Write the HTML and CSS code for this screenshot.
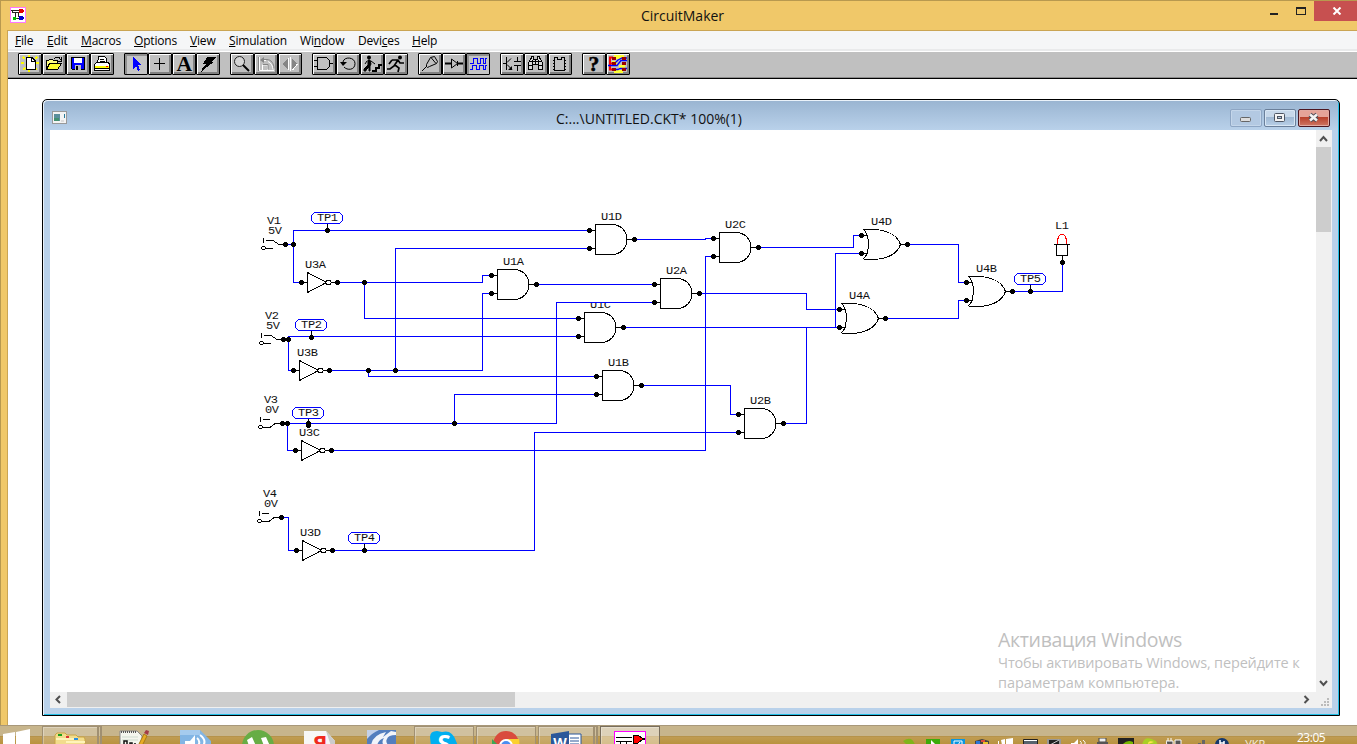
FILE: index.html
```html
<!DOCTYPE html>
<html lang="en">
<head>
<meta charset="utf-8">
<title>CircuitMaker</title>
<link rel="stylesheet" href="styles.css">
</head>
<body>
<div class="screen">
<div class="app">
  <header class="titlebar">
    <svg class="app-icon" width="16" height="16" viewBox="0 0 16 16" shape-rendering="crispEdges"><rect x=".5" y=".5" width="15" height="15" fill="#fff" stroke="#f7f"/><path d="M1 3.500h9M2 5.500h6M2.500 3v3M5.500 6v5.500h5M8.500 5v5" fill="none" stroke="#222"/><path d="M9 2h3l3 2-3 2H9z" fill="#e00000"/><path d="M9 9h3l3 2-3 2H9z" fill="#00c"/><path d="M3 10h3v1h1v1H6v1H3z" fill="#0b0"/></svg>
    <h1 class="app-title">CircuitMaker</h1>
    <div class="controls">
      <span class="ctl-min"></span><span class="ctl-max"></span>
      <span class="ctl-close"><svg width="10" height="8" viewBox="0 0 10 8"><path d="M1.500.5l7 7M8.500.5l-7 7" stroke="#fff" stroke-width="2"/></svg></span>
    </div>
  </header>
  <div class="frame">
  <nav class="menu">
    <span><u>F</u>ile</span><span><u>E</u>dit</span><span><u>M</u>acros</span><span><u>O</u>ptions</span><span><u>V</u>iew</span><span><u>S</u>imulation</span><span>Wi<u>n</u>dow</span><span>Devi<u>c</u>es</span><span><u>H</u>elp</span>
  </nav>
  <div class="toolbar">
    <div class="group">
      <div class="tool"><svg viewBox="0 0 24 22"><path d="M5 4l2 2M11 2v2M19 4l-2 2M3 10h3M18 10h3M5 17l2-2M11 17v2M19 17l-2-2" stroke="#ff0" stroke-width="1.500"/><path d="M8 4.500h6l3 3v8.500H8z" fill="#fff" stroke="#000"/><path d="M13.500 4v4H17" fill="none" stroke="#000"/></svg></div>
      <div class="tool"><svg viewBox="0 0 24 22"><path d="M4.500 16V7.500h2l1-1h3l1 1h4V10" fill="#ffff80" stroke="#000"/><path d="M4.500 16.500l3-6h12l-4 6z" fill="#ffff30" stroke="#000"/><path d="M12 5.500l2-1h3l2 2.500M19.500 4v4H16" fill="none" stroke="#000"/></svg></div>
      <div class="tool"><svg viewBox="0 0 24 22"><path d="M5.500 4.500h13v12h-12l-1-1z" fill="#00f" stroke="#000"/><path d="M8 5h8v5H8z" fill="#fff"/><path d="M9 12h6v5H9z" fill="#c0c0c0"/><path d="M10 13h2v4h-2z" fill="#000"/></svg></div>
      <div class="tool"><svg viewBox="0 0 24 22"><path d="M7.500 10l1-6.500h6l2 2V10z" fill="#fff" stroke="#000"/><path d="M10 6h4M10 8h5" stroke="#000"/><path d="M4.500 11.500l2-2h12l1 2v6h-15z" fill="#fff" stroke="#000"/><path d="M5 13.500h14" stroke="#ff0" stroke-width="2"/><path d="M5 15.500h14" stroke="#000"/><path d="M16 13h2v1h-2z" fill="#f00"/></svg></div>
    </div>
    <div class="group">
      <div class="tool on"><svg viewBox="0 0 24 22"><path d="M9 4v12l3-3 2 5 2-1-2-5h4z" fill="#00f"/></svg></div>
      <div class="tool"><svg viewBox="0 0 24 22"><path d="M11.500 5v12M6 10.500h11" stroke="#000"/></svg></div>
      <div class="tool"><span class="letter">A</span></div>
      <div class="tool"><svg viewBox="0 0 24 22"><path d="M11 4h9l-4 5h2L8 16l-3 3 2-5 3-3H7z" fill="#000"/></svg></div>
    </div>
    <div class="group">
      <div class="tool"><svg class="smooth" viewBox="0 0 24 22"><circle cx="9.500" cy="8.500" r="5" fill="#d4d4d4" stroke="#222"/><path d="M13 12l6 6" stroke="#000" stroke-width="2"/></svg></div>
      <div class="tool"><svg class="smooth" viewBox="0 0 24 22"><path d="M5.500 4v13.500H20M7 7.500h5M14 8.500c3 1 5 5 5 8M8.500 17v-5h5v5" fill="none" stroke="#fff"/><path d="M4.500 4v14M8 6.500h5c4 0 7 4 7 9M9 11.500h5v5" fill="none" stroke="#858585"/><path d="M6 7l4-3v6z" fill="#858585"/></svg></div>
      <div class="tool"><svg viewBox="0 0 24 22"><path d="M10 5v12l-5-6zM14 5v12l5-6z" fill="#858585"/><path d="M12.500 4v14M10.500 5v12M14.500 17l5-6" stroke="#fff" fill="none"/></svg></div>
    </div>
    <div class="group">
      <div class="tool"><svg viewBox="0 0 24 22"><path d="M5.500 4.500h7c7 0 7 12 0 12h-7zM2 7.500h3M2 13.500h3M18 10.500h3" fill="none" stroke="#000"/></svg></div>
      <div class="tool"><svg class="smooth" viewBox="0 0 24 22"><path d="M7 9c1-6 12-5 12 1.500 0 7-8 7-11 3.500" fill="none" stroke="#000"/><path d="M4 9h7l-4 4z" fill="#000"/></svg></div>
      <div class="tool"><svg class="smooth" viewBox="0 0 24 22"><circle cx="9" cy="4.500" r="2" fill="#000"/><path d="M8 7h2l1 4-1 2v5H9v-4l-3 3v1H4v-2l4-4zM11 8l4 3M7 8l-2 3" fill="#000" stroke="#000"/><path d="M12 18h4v-3h3v-3h3" fill="none" stroke="#000" stroke-width="2"/></svg></div>
      <div class="tool"><svg class="smooth" viewBox="0 0 24 22"><circle cx="16" cy="4.500" r="2" fill="#000"/><path d="M14 7l-4 6-4 3H3M11 12l4 3-1 4M8 7h6l2 3h4M8 7l-3 4" fill="none" stroke="#000" stroke-width="1.700"/></svg></div>
    </div>
    <div class="group">
      <div class="tool"><svg class="smooth" viewBox="0 0 24 22"><path d="M4 18l5-5M8.500 11.500l4-7 4-1 3 5-1 2-7 3-2 1-1-1zM13 4.500l5 6" fill="none" stroke="#000"/></svg></div>
      <div class="tool"><svg class="smooth" viewBox="0 0 24 22"><path d="M3 10.500h6M16 10.500h5" stroke="#000" stroke-width="2"/><path d="M9.500 6v9l6-4.500zM15.500 8v5" fill="none" stroke="#000"/></svg></div>
      <div class="tool on"><svg viewBox="0 0 24 22"><path d="M4 10.500h3v-5h4v5h3v-5h3v5h2v-5h2M4 16.500h2v-4h4v4h3v-4h4v4h2v-4h2" fill="none" stroke="#00f"/></svg></div>
    </div>
    <div class="group">
      <div class="tool"><svg class="smooth" viewBox="0 0 24 22"><path d="M6.500 4v13M3 10.500h4M7 9.500l4-4M7 11.500l5 5M14 8.500h7M14 12.500h7M17.500 4v4M17.500 13v5" fill="none" stroke="#000"/><path d="M12 13v4H8z" fill="#000"/></svg></div>
      <div class="tool"><svg viewBox="0 0 24 22"><path d="M4.500 16.500v-6l2-5h1v-2h2v3h4v-3h2v2h1l2 5v6h-4v-5h-6v5z" fill="#d8d8d8" stroke="#000"/><path d="M6 8.500h11M5 12.500h4M14 12.500h4M8.500 7v9M14.500 7v9M11.500 7v5" stroke="#000"/></svg></div>
      <div class="tool"><svg viewBox="0 0 24 22"><path d="M6.500 4.500h3v2h4v-2h3v13h-10z" fill="none" stroke="#000"/><path d="M5 7.500h2M5 10.500h2M5 13.500h2M5 16.500h2M16 7.500h2M16 10.500h2M16 13.500h2M16 16.500h2" stroke="#000"/></svg></div>
    </div>
    <div class="group">
      <div class="tool"><span class="letter question">?</span></div>
      <div class="tool"><svg class="smooth" viewBox="0 0 24 22"><path d="M8 2h10v4H8zM6 8h5v3H6zM13 12h6v3h-6zM8 17h9v3H8z" fill="#ff3"/><path d="M7 4.500h-3v12h3M4 10.500h3" stroke="#f00" stroke-width="2" fill="none"/><path d="M2 12.500h9l4-5h6M9 10l3-3 4-2h5M8 16.500h4l2-1h7" stroke="#00f" fill="none" stroke-width="1.300"/><path d="M6 4h4v3H6zM6 9h4v3H6zM6 15h4v3H6zM16 4h4v3h-4zM16 9h4v3h-4zM16 15h4v3h-4z" fill="#900"/></svg></div>
    </div>
  </div>
  <main class="workspace">
    <section class="child">
      <div class="child-title">
        <svg width="16" height="14" viewBox="0 0 16 14" shape-rendering="crispEdges"><rect x=".5" y=".5" width="14" height="12" fill="#f4f4f4" stroke="#999"/><path d="M2 3h6v7H2z" fill="#5b8f9c"/><path d="M2 7h5v3H2z" fill="#439070"/><path d="M9 9h3v2H9z" fill="#ddd"/><path d="M12 3h1v4h-1z" fill="#287a9b"/></svg>
        <h2>C:...\UNTITLED.CKT* 100%(1)</h2>
        <div class="child-controls">
          <span class="cbtn dim"><svg width="30" height="16"><rect x="9.500" y="7.500" width="10" height="4" rx="1" fill="#ddd" stroke="#666"/></svg></span>
          <span class="cbtn"><svg width="30" height="16"><rect x="9.500" y="3.500" width="10" height="8" rx="1" fill="#f4f4f4" stroke="#4d5563"/><rect x="12.500" y="6.500" width="4" height="2" fill="#b6c8dc" stroke="#4d5563"/></svg></span>
          <span class="cbtn red"><svg width="30" height="16"><path d="M11 4.500l7 6M18 4.500l-7 6" stroke="#4d4d57" stroke-width="4.500"/><path d="M11 4.500l7 6M18 4.500l-7 6" stroke="#f4f4f4" stroke-width="2.600"/></svg></span>
        </div>
      </div>
      <div class="client">
        <div class="canvas">
<svg class="schematic" width="1266" height="562" viewBox="50 130 1266 562">
<defs>
  <path id="dot" d="M-1-2h3v1h1v3h-1v1h-3v-1h-1v-3h1z" fill="#000"/>
  <g id="and"><path class="ink" d="M16.500.5H.5v30h16M16.500.5c20.500 0 20.500 30 0 30M-5 6.500H0M-5 24.500H0M32 15.500h6"/><use href="#dot" x="-6" y="6"/><use href="#dot" x="-6" y="24"/><use href="#dot" x="39" y="15"/></g>
  <g id="or"><path class="ink" d="M2.500.5h12c12 1 22 6 25 15-3 9-13 14-26 15h-11M2.500.5c6.500 5 6.500 25-.5 29.500M0 6.500h7M0 24.500h7M39 15.500h6"/><use href="#dot" x="0" y="6"/><use href="#dot" x="0" y="24"/><use href="#dot" x="46" y="15"/></g>
  <g id="inv"><path class="ink" d="M6.500-9.500v20l19-10zM1 .5h5M30 .5h5"/><path class="bubble" d="M26-1.500h3l1.500 2-1.500 2h-3l-1.500-2z"/><use href="#dot"/><use href="#dot" x="36"/></g>
  <g id="swhi"><path class="ink" d="M-21.500-6v5M-19-3.500h7l6 4h5M-19 4.500h7"/><path class="ink" d="M-22.500 2.500h2l1 1v1l-1 1h-2l-1-1v-1z"/><use href="#dot"/></g>
  <g id="swlo"><path class="ink" d="M-21.500-6v5M-19-3.500h7M-19 4.500h7l5-4h6"/><path class="ink" d="M-22.500 2.500h2l1 1v1l-1 1h-2l-1-1v-1z"/><use href="#dot"/></g>
  <g id="tp"><path class="tpbox" d="M-12.500-17.500h25l3 3v5l-3 3h-25l-3-3v-5z"/><path class="ink" d="M.5-6v5"/><use href="#dot"/></g>
</defs>
<g class="labels" transform="translate(0 -2)">
  <text x="267" y="226" textLength="14">V1</text><text x="268" y="236" textLength="14">5V</text>
  <text x="265" y="321" textLength="14">V2</text><text x="266" y="331" textLength="14">5V</text>
  <text x="264" y="405" textLength="14">V3</text><text x="265" y="415" textLength="14">0V</text>
  <text x="263" y="499" textLength="14">V4</text><text x="264" y="509" textLength="14">0V</text>
  <text x="305" y="270" textLength="21">U3A</text><text x="297" y="358" textLength="21">U3B</text><text x="299" y="438" textLength="21">U3C</text><text x="300" y="538" textLength="21">U3D</text>
  <text x="601" y="222" textLength="21">U1D</text><text x="503" y="267" textLength="21">U1A</text><text x="590" y="310" textLength="21">U1C</text><text x="608" y="368" textLength="21">U1B</text>
  <text x="666" y="276" textLength="21">U2A</text><text x="725" y="230" textLength="21">U2C</text><text x="750" y="406" textLength="21">U2B</text>
  <text x="871" y="227" textLength="21">U4D</text><text x="849" y="301" textLength="21">U4A</text><text x="976" y="274" textLength="21">U4B</text><text x="1055" y="231" textLength="14">L1</text>
  <text x="317" y="222.500" textLength="21">TP1</text><text x="301" y="329.500" textLength="21">TP2</text><text x="298" y="417.500" textLength="21">TP3</text><text x="354" y="542.500" textLength="21">TP4</text><text x="1020" y="283.500" textLength="21">TP5</text>
</g>
<path fill="#fff" d="M589 298h23v5h-23z"/>
<g class="wires" transform="translate(.5 .5)">
  <path d="M285 244h8V230H589M293 244V282H301M337 282H482V275H491M364 282V318H578M395 370V248H589"/>
  <path d="M283 339h5V336H578M288 339V370H293M329 370H482V293H491M368 370V376H596"/>
  <path d="M282 423H556V302H654M287 423V450H295M454 423V394H596M331 450H705V256H713"/>
  <path d="M281 517H288V550H296M332 550H534V432H738"/>
  <path d="M634 239H705V238H713M536 284H654M699 293H806V309H839M623 327H839M641 385H730V414H738M783 423H806V327M835 327V253H861"/>
  <path d="M758 247H853V235H861M907 244H958V282H966M885 318H958V300H966M1012 291H1062V262"/>
</g>
<g class="parts">
  <use href="#swhi" x="285" y="244"/><use href="#swhi" x="283" y="339"/><use href="#swlo" x="282" y="423"/><use href="#swlo" x="281" y="517"/>
  <use href="#inv" x="301" y="282"/><use href="#inv" x="293" y="370"/><use href="#inv" x="295" y="450"/><use href="#inv" x="296" y="550"/>
  <use href="#and" x="595" y="224"/><use href="#and" x="497" y="269"/><use href="#and" x="584" y="312"/><use href="#and" x="602" y="370"/><use href="#and" x="660" y="278"/><use href="#and" x="719" y="232"/><use href="#and" x="744" y="408"/>
  <use href="#or" x="861" y="229"/><use href="#or" x="839" y="303"/><use href="#or" x="966" y="276"/>
  <use href="#tp" x="327" y="230"/><use href="#tp" x="311" y="337"/><use href="#tp" x="308" y="425"/><use href="#tp" x="364" y="550"/><use href="#tp" x="1030" y="291"/>
  <use href="#dot" x="293" y="244"/><use href="#dot" x="288" y="339"/><use href="#dot" x="287" y="423"/><use href="#dot" x="308" y="423"/><use href="#dot" x="364" y="282"/><use href="#dot" x="395" y="370"/><use href="#dot" x="368" y="370"/><use href="#dot" x="454" y="423"/><use href="#dot" x="1062" y="262"/>
  <path class="ink" d="M1054 244.500h16M1056.500 244.500v11h11v-11M1062.500 256v5"/>
  <path class="ink lamp" d="M1057.500 244v-4l1-3 2-3h3l2 3 1 3v4"/>
</g>
</svg>
          <div class="watermark">
            <p class="wm-head">Активация Windows</p>
            <p class="wm-a">Чтобы активировать Windows, перейдите к</p>
            <p class="wm-b">параметрам компьютера.</p>
          </div>
        </div>
        <div class="vscroll">
          <svg width="16" height="17"><path d="M4 11l3.500-4 3.500 4" class="chev"/></svg><div class="vthumb"></div>
          <svg class="end" width="16" height="17"><path d="M4 6l3.500 4L11 6" class="chev"/></svg>
        </div>
        <div class="hscroll">
          <svg width="17" height="16"><path d="M10 4L6.500 7.500 10 11" class="chev"/></svg><div class="hthumb"></div>
          <svg class="end" width="17" height="16"><path d="M5.500 4L9 7.500 5.500 11" class="chev"/></svg>
        </div>
        <div class="grip"><svg width="16" height="16" fill="#bbb"><path d="M11 6h2v2h-2zM8 9h2v2H8zM11 9h2v2h-2zM5 12h2v2H5zM8 12h2v2H8zM11 12h2v2h-2z"/></svg></div>
      </div>
    </section>
  </main>
  </div>
</div>
<footer class="taskbar">
  <div class="start"><svg width="28" height="16"><path d="M0 6l12-2v12H0zM13 4l14-3v15H13z" fill="#fff"/></svg></div>
  <div class="task open stacked"><svg width="32" height="16"><path d="M1 16V5l2-2h8l2 2h9l2 2h6l1 2v7z" fill="#f2dc8c" stroke="#c9a544"/><path d="M2 9h20M12 12h19" stroke="#fff4b8" stroke-width="2"/><path d="M4 4h4v2H4z" fill="#1ba01b"/><path d="M12 6h3v2h-3z" fill="#d33"/><path d="M20 8h4v2h-4z" fill="#2a8fe0"/></svg></div>
  <div class="task"><svg width="32" height="16"><path d="M2 1h17l5 5v10H2z" fill="#f4f6ee" stroke="#888"/><path d="M3 2h15" stroke="#555" stroke-dasharray="1 1" stroke-width="2"/><path d="M4 7h16M4 10h16" stroke="#cfdccf"/><path d="M6 16v-5h3v5M12 16v-3h2v3M17 16v-3" fill="none" stroke="#111" stroke-width="1.500"/><path d="M20 16l6-12 3 2-5 10z" fill="#e8ac24" stroke="#a97a14"/><path d="M26 3l2-3 3 1-1 4z" fill="#a33c46"/></svg></div>
  <div class="task"><svg width="32" height="16"><path d="M0 0h20l11 11v5H0z" fill="#82b5e4"/><path d="M0 0h20v5H0z" fill="#a5cbee"/><path d="M5 11h5l5-6v11H5z" fill="#fff"/><path d="M17 8q4 3 1 8M20 5q7 5 3 11" fill="none" stroke="#fff" stroke-width="2"/></svg></div>
  <div class="task"><svg width="32" height="16"><circle cx="16" cy="16" r="16" fill="#67ad45"/><path d="M5 10l5-3 4 9H7zM19 8l5-1 4 9h-6z" fill="#fff"/></svg></div>
  <div class="task"><svg width="32" height="16"><path d="M0 1h22l9 10v5H0z" fill="#f7f7f7"/><path d="M22 1l9 10v5h-4z" fill="#ccc"/></svg><b class="ya">Я</b></div>
  <div class="task"><svg width="32" height="16"><path d="M1 0h29v16H1z" fill="#537ebe"/><path d="M1 0h12Q6 3 1 9z" fill="#c3d1ea"/><path d="M5 16Q6 5 20 2l-3 5 8-6 5 1v3q-8 0-9 4-2 3 2 7h-5q-3-4 0-8-6 2-7 8z" fill="#f1f4fa"/></svg></div>
  <div class="task open"><svg width="32" height="16"><path d="M2 7Q2 1 9 1l5 1q10-3 14 9l2 5H3Z" fill="#00aff0"/></svg><b class="sk">S</b></div>
  <div class="task open"><svg width="32" height="16"><path d="M2 16Q5 1 16 1t14 14v1z" fill="#d94b3d"/><path d="M2 9l7 7H2z" fill="#3aa757"/><path d="M17 9h12l1 7H18z" fill="#fbd02f"/><circle cx="16" cy="16" r="7" fill="#fff"/><circle cx="16" cy="16" r="5" fill="#4a8df0"/></svg></div>
  <div class="task open stacked"><svg width="32" height="16"><path d="M18 4h13v12H18z" fill="#fff" stroke="#2b579a"/><path d="M20 8h9M20 11h9M20 14h9" stroke="#2b579a"/><path d="M1 4l18-3v15H1z" fill="#2b579a"/></svg><b class="wd">W</b></div>
  <div class="task open current"><svg width="32" height="16" shape-rendering="crispEdges"><rect x=".5" y="1.500" width="31" height="31" fill="#fff" stroke="#f0f"/><path d="M2 7.500h16M2 11.500h16M6.500 12v4M12.500 12v4" stroke="#000"/><path d="M19 5h5l5 4-5 4h-5z" fill="#f00" stroke="#000"/><path d="M28 9h3" stroke="#000" stroke-width="2"/></svg></div>
  <div class="tray">
    <svg><path d="M1 3Q10-3 13 7H5z" fill="#7fb51b"/></svg>
    <svg><path d="M0 1h14v6H0z" fill="#3bab09"/><path d="M5 2l5 5H5z" fill="#fff"/></svg>
    <svg><path d="M1 1h14v6H1z" fill="#0a96e0"/><path d="M4 3h8v4H4zM8 7l2-3" fill="none" stroke="#fff"/></svg>
    <svg><path d="M1 3l7-2 7 2v4H1z" fill="#444"/><path d="M2 3h4v3H2z" fill="#2b75d5"/><path d="M7 2h4v2H7z" fill="#dd4b39"/><path d="M9 4h5v3H9z" fill="#e9c62a"/></svg>
    <svg><path d="M0 3h1v4H0zM3 2l4-1v6H4zM8 1l7-1v7H8z" fill="#fff"/></svg>
    <svg><path d="M1.500 1.500h14v6h-14z" fill="#57636e" stroke="#222"/><path d="M2 2.500h13" stroke="#fff"/></svg>
    <svg><path d="M1 1h14v6H1z" fill="#999"/><path d="M3 2h10v5H3z" fill="#222"/><path d="M4 7l9-5" stroke="#ccc"/></svg>
    <svg><path d="M1 5h3l4-4v6H1z" fill="#fff"/><path d="M10 3q2 1 1 4M13 2q3 2 2 5" fill="none" stroke="#fff"/></svg>
    <svg><path d="M5 0h7v4H5z" fill="#eee" stroke="#444"/><path d="M3 4h11v3H3z" fill="#555"/></svg>
    <svg><path d="M0 0h16v7H0z" fill="#222"/><path d="M4 7q5-6 11-3v3z" fill="#76b900"/></svg>
    <svg><path d="M0 7Q2-4 14 3l2 4z" fill="#a8cf26"/><path d="M6 6q0-4 6-2z" fill="#ffe94b"/></svg>
    <svg><path d="M2 0v3M5 0v3M0 3h7v4H1zM9 2h6v5H9z" fill="#555" stroke="#fff"/></svg>
    <svg><path d="M8 5h3v2H8zM12 2h3v5h-3z" fill="#666"/></svg>
    <svg><circle cx="8" cy="7" r="7" fill="#16386c"/><path d="M6 2v5M10 3v4M6 5h4" stroke="#fff" stroke-width="1.500"/></svg>
  </div>
  <span class="lang">УКР</span><span class="clock">23:05</span>
</footer>
</div>
</body>
</html>
```
FILE: styles.css
```css
* { box-sizing: border-box; }
body { margin: 0; overflow: hidden; font-family: "Open Sans", "Noto Sans", sans-serif; color: #111; }
h1, h2, p { margin: 0; font-weight: 400; }
svg { display: block; flex: none; }

.screen { width: 1357px; height: 744px; display: flex; flex-direction: column; overflow: hidden; }
.app { height: 725px; display: flex; flex-direction: column; background: #f0c869; border-top: 1px solid #b8994f; border-left: 1px solid #b8994f; }
.titlebar { height: 29px; flex: none; display: grid; grid-template-columns: 200px 1fr 200px; }
.app-icon { margin: 6px 0 0 9px; }
.app-title { text-align: center; font-size: 14px; line-height: 30px; padding-left: 7px; letter-spacing: 0; }
.controls { display: flex; justify-content: flex-end; }
.ctl-min { width: 8px; height: 2px; background: #222; margin: 12px 18px 0 0; }
.ctl-max { width: 10px; height: 8px; border: 1px solid #222; border-top-width: 2px; margin: 6px 8px 0 0; }
.ctl-close { width: 43px; height: 20px; background: #c75050; display: flex; align-items: center; justify-content: center; padding-left: 3px; }

.frame { flex: 1; min-height: 0; margin-left: 6px; border-left: 1px solid #caa554; border-top: 1px solid #caa554; display: flex; flex-direction: column; background: #fff; }
.menu { height: 20px; flex: none; display: grid; grid-template-columns: 32px 34px 53px 56px 39px 71px 58px 54px 60px; padding-left: 7px; background: #f5f6f7; border-bottom: 2px solid #e9eaeb; font-size: 12px; line-height: 20px; letter-spacing: -0.18px; white-space: nowrap; color: #000; }
.menu u { text-decoration-thickness: 1px; text-underline-offset: 1px; }
.toolbar { height: 28px; flex: none; display: flex; gap: 10px; padding: 1px 0 0 10px; background: #c0c0c0; border-top: 1px solid #fff; border-bottom: 1px solid #000; box-shadow: inset 0 -1px #8c8c8c; }
.group { display: flex; }
.tool { width: 24px; height: 22px; overflow: hidden; border: 1px solid #000; border-radius: 1px; background: #c0c0c0; box-shadow: inset 1px 1px #fff, inset -2px -2px #808080; display: flex; justify-content: center; }
.tool svg { width: 24px; height: 22px; margin: -1px; fill: none; shape-rendering: crispEdges; }
.tool svg.smooth { shape-rendering: auto; }
.tool.on { box-shadow: inset 2px 2px #909090; background: #c4c4c4; }
.letter { font: 700 20px/20px "Liberation Serif", serif; color: #000; transform: scaleX(1.08); }
.question { font-size: 20px; -webkit-text-stroke: 0.5px #000; }

.workspace { flex: 1; min-height: 0; padding: 20px 0 0 34px; }
.child { width: 1298px; height: 617px; border: 1px solid #000; border-radius: 5px 5px 0 0; background: linear-gradient(#99b4d1, #b9d1ea 30px); box-shadow: inset 1px 1px #eaf2fa, inset -1px -1px #22bfe6; padding: 0 7px; }
.child-title { height: 30px; display: grid; grid-template-columns: 101px 1fr 101px; align-items: start; }
.child-title > svg { margin: 11px 0 0 2px; }
.child-title h2 { text-align: center; font-size: 14px; line-height: 38px; letter-spacing: 0; padding-right: 84px; white-space: nowrap; }
.child-controls { display: flex; gap: 2px; justify-content: flex-end; padding: 9px 2px 0 0; }
.cbtn { width: 32px; height: 18px; border: 1px solid #6a7f9a; border-radius: 2px; background: linear-gradient(#c7d8ea 45%, #9fb8d3 46%, #b9d0e8); box-shadow: inset 0 0 0 1px #d8e6f4; }
.cbtn.dim { border-color: #8ea6c4; background: #b3c9e2; box-shadow: inset 0 0 0 1px #c4d6ea; }
.cbtn.red { border-color: #4c1620; background: linear-gradient(#e5a398 45%, #b8402b 46%, #cf7764); box-shadow: inset 0 0 0 1px #e2a9a0; }
.client { width: 1282px; height: 578px; display: grid; grid-template-columns: 1266px 16px; grid-template-rows: 562px 16px; background: #f0f0f0; }
.canvas { position: relative; background: #fff; }
.chev { fill: none; stroke: #505050; stroke-width: 2; }
.vscroll { display: flex; flex-direction: column; }
.vthumb { width: 15px; height: 85px; background: #cdcdcd; }
.vscroll .end { margin-top: auto; }
.hscroll { display: flex; }
.hthumb { width: 448px; height: 15px; background: #cdcdcd; }
.hscroll .end { margin-left: auto; }

.schematic { shape-rendering: crispEdges; }
.labels { font: 12px "Liberation Mono", monospace; fill: #111; }
.labels text { transform-box: fill-box; transform-origin: bottom; transform: scaleY(0.9); }
.ink { fill: none; stroke: #000; stroke-width: 1; }
.bubble { fill: #fff; stroke: #000; stroke-width: 1; }
.lamp { stroke: #f00; }
.tpbox { fill: none; stroke: #00f; }
.wires { fill: none; stroke: #00f; stroke-width: 1; }

.watermark { position: absolute; left: 948px; top: 496px; color: #bfbfbf; white-space: nowrap; }
.wm-head { font-size: 19.500px; line-height: 28px; letter-spacing: -0.32px; }
.wm-a, .wm-b { font-size: 14.500px; line-height: 20px; }
.wm-a { margin-top: -1px; letter-spacing: -0.16px; }
.wm-b { letter-spacing: -0.08px; }

.taskbar { height: 19px; flex: none; display: flex; overflow: hidden; border-top: 1px solid #a8987a; background: linear-gradient(#c7b58c 10px, #b6934a 10px, #b6934a 11px, #c09c52 11px, #b9933f); }
.start { width: 42px; padding: 2px 0 0 3px; }
.task { width: 60px; height: 32px; flex: none; margin-right: 2px; position: relative; display: flex; justify-content: center; padding-top: 3px; border: 1px solid transparent; }
.task.open { border-color: #a09072; background: rgba(255, 255, 255, 0.17); box-shadow: inset 1px 1px rgba(255, 255, 255, 0.3); }
.task.stacked { border-right: 5px double #a09072; }
.task.current { background: rgba(255, 255, 255, 0.4); border-color: #786e5c; }
.task b { position: absolute; left: 0; right: 0; text-align: center; line-height: 24px; }
.ya { top: 3px; color: #f02a1d; font-size: 22px; }
.sk { top: 4px; color: #fff; font-size: 24px; }
.task .wd { top: 4px; left: -12px; color: #fff; font-size: 14px; }
.tray { display: flex; gap: 8px; margin-left: 240px; padding-top: 12px; }
.tray svg { width: 16px; height: 7px; }
.lang { color: #f4efe2; font-size: 11px; line-height: 14px; margin: 11px 0 0 15px; width: 52px; }
.clock { color: #fff; font-size: 12px; line-height: 16px; margin-top: 4px; letter-spacing: -0.5px; }
```
